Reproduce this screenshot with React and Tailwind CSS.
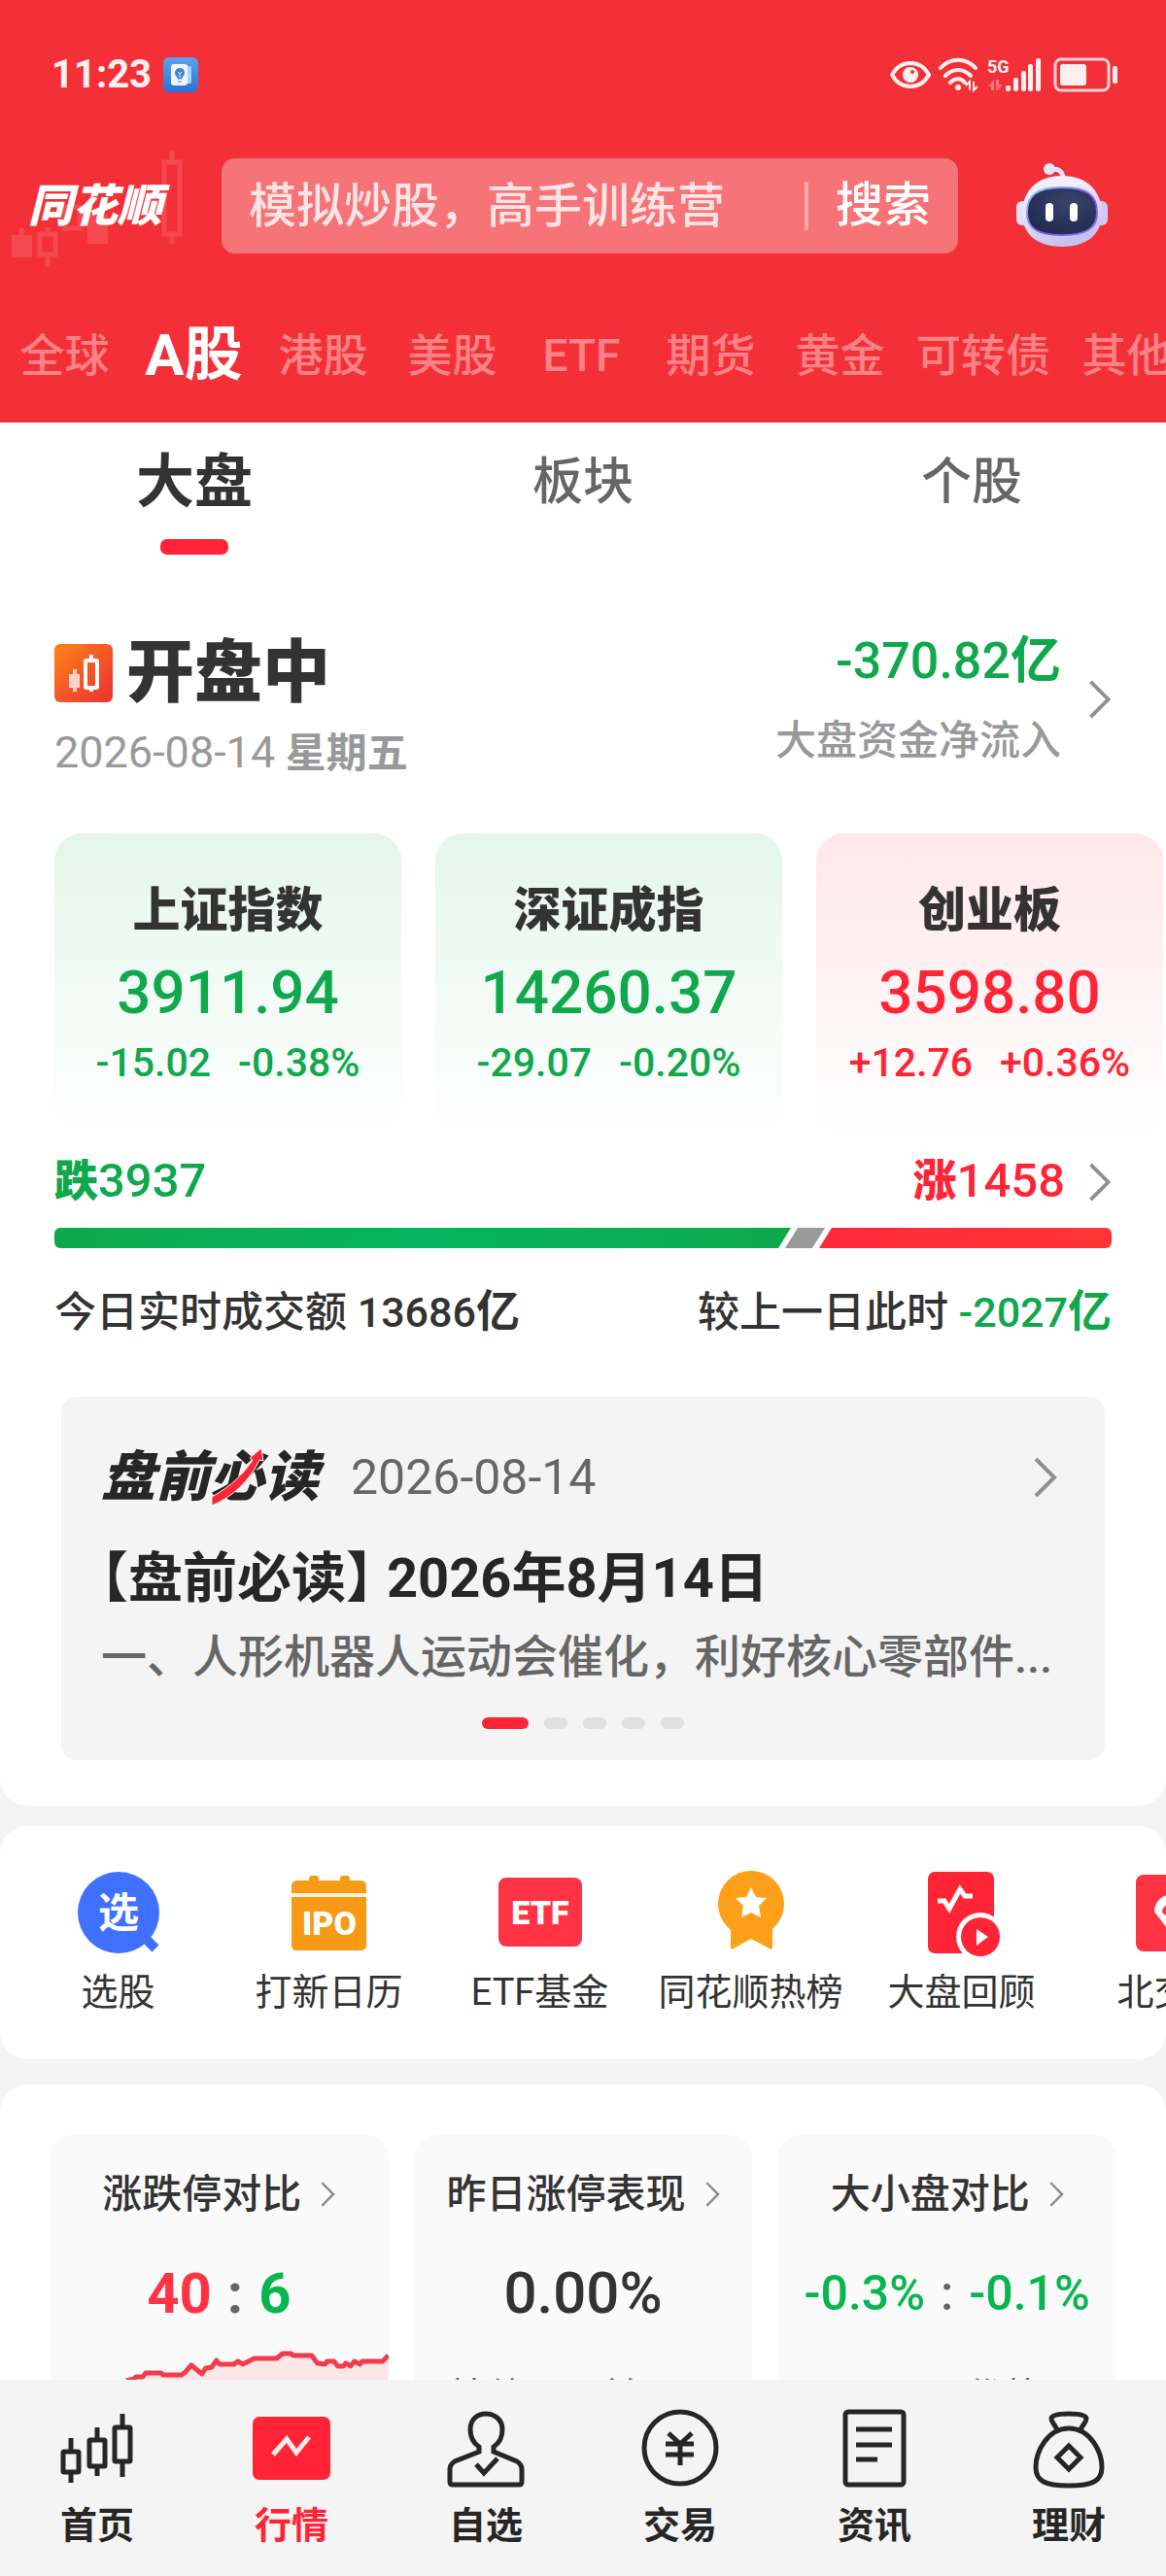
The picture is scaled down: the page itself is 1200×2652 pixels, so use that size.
import React, { useState } from 'react'

const markets = ['全球', 'A股', '港股', '美股', 'ETF', '期货', '黄金', '可转债', '其他']
const views = ['大盘', '板块', '个股']

const indices = [
  { name: '上证指数', value: '3911.94', change: '-15.02', percent: '-0.38%', up: false },
  { name: '深证成指', value: '14260.37', change: '-29.07', percent: '-0.20%', up: false },
  { name: '创业板', value: '3598.80', change: '+12.76', percent: '+0.36%', up: true },
]

const breadth = { down: 758, flat: 41, up: 301 }

const Chevron = ({ className }) => (
  <svg viewBox="0 0 24 42" fill="none" className={className} aria-hidden="true">
    <path d="M2 2 L21 21 L2 40" stroke="#8f8f8f" strokeWidth="4" />
  </svg>
)

/* Barra de estado */
const StatusBar = () => (
  <div className="flex h-[54px] items-center justify-between pl-[53px] pr-[50px] text-[#fff0f0]">
    <div className="flex items-center gap-3">
      <span className="text-[40px] font-bold leading-[54px]">11:23</span>
      <svg viewBox="0 0 36 36" className="h-9 w-9" aria-hidden="true">
        <defs>
          <linearGradient id="note" x1="0" y1="0" x2="0" y2="1">
            <stop offset="0" stopColor="#5aa5ea" />
            <stop offset="1" stopColor="#2c6fd6" />
          </linearGradient>
        </defs>
        <rect width="36" height="36" rx="6" fill="url(#note)" />
        <rect x="22" y="9" width="7" height="18" rx="2" fill="#a9d2f7" />
        <rect x="8" y="7" width="17" height="22" rx="3" fill="#eef7ff" />
        <circle cx="17" cy="16" r="5" fill="#3b82d8" />
        <path d="M15 19h4v3h-4zM15 25h4" fill="#3b82d8" stroke="#3b82d8" />
        <path d="M15 15l2 2 2-2M17 17v4" stroke="#eef7ff" fill="none" />
      </svg>
    </div>
    <div className="flex items-center gap-2">
      <svg viewBox="0 0 42 36" className="h-9 w-[42px]" aria-hidden="true">
        <path d="M2 18C7 9 14 6 21 6s14 3 19 12c-5 9-12 12-19 12S7 27 2 18z" fill="none" stroke="currentColor" strokeWidth="4" />
        <circle cx="21" cy="18" r="8" fill="currentColor" />
        <circle cx="23" cy="15" r="2" fill="#f33038" />
      </svg>
      <svg viewBox="0 0 42 36" className="h-9 w-[42px]" fill="none" stroke="currentColor" strokeWidth="4" aria-hidden="true">
        <path d="M2 11c10-11 26-11 36 0M7 19c8-8 18-8 26 0M12 26c5-5 11-5 15 0" strokeLinecap="round" />
        <circle cx="20" cy="31" r="3" fill="currentColor" stroke="none" />
        <path d="M28 29l4-4v9M36 25v9l4-4" strokeWidth="2" />
      </svg>
      <svg viewBox="0 0 56 36" className="h-9 w-14" fill="currentColor" aria-hidden="true">
        <text x="0" y="16" fontSize="18" fontWeight="700">5G</text>
        <path d="M1 30l6-7v11H4v-4zM9 23h3v5h4l-5 6H9z" opacity="0.35" />
        <rect x="19" y="29" width="5" height="6" rx="2" />
        <rect x="27" y="21" width="5" height="14" rx="2" />
        <rect x="35" y="14" width="5" height="21" rx="2" />
        <rect x="42" y="7" width="5" height="28" rx="2" />
        <rect x="50" y="1" width="5" height="34" rx="2" />
      </svg>
      <svg viewBox="0 0 66 36" className="ml-1 h-9 w-[66px]" aria-hidden="true">
        <rect x="2" y="2" width="55" height="32" rx="6" fill="none" stroke="currentColor" strokeOpacity="0.85" strokeWidth="3" />
        <rect x="7" y="7" width="27" height="22" rx="3" fill="currentColor" />
        <rect x="61" y="9" width="5" height="18" rx="2" fill="currentColor" />
      </svg>
    </div>
  </div>
)

const Logo = () => (
  <div className="relative ml-[29px] w-[142px] shrink-0">
    {/* Velas de fondo */}
    <svg
      viewBox="0 0 180 122"
      className="absolute -left-[21px] -top-[25px] h-[122px] w-[180px]"
      fill="none"
      stroke="#f5494f"
      strokeWidth="5"
      aria-hidden="true"
    >
      <path d="M4 87h21v23H4z" fill="#f5494f" stroke="none" />
      <rect x="12" y="80" width="5" height="8" fill="#f5494f" stroke="none" />
      <rect x="33" y="86" width="16" height="21" />
      <path d="M41 79v6M41 109v11" />
      <rect x="58" y="58" width="16" height="22" />
      <rect x="82" y="66" width="21" height="30" fill="#f5494f" stroke="none" />
      <rect x="161" y="12" width="16" height="74" />
      <path d="M169 0v11M169 87v9" />
    </svg>
    <h1 className="relative whitespace-nowrap text-[46px] font-black italic leading-[64px] text-white">同花顺</h1>
  </div>
)

const Robot = () => (
  <svg viewBox="0 0 94 90" className="h-[90px] w-[94px]" aria-hidden="true">
    <defs>
      <linearGradient id="head" x1="0" y1="0" x2="0.4" y2="1">
        <stop offset="0.3" stopColor="#f1effb" />
        <stop offset="1" stopColor="#c6c2ee" />
      </linearGradient>
      <linearGradient id="rim" x1="0" y1="0" x2="1" y2="1">
        <stop offset="0" stopColor="#7fd0e8" />
        <stop offset="0.6" stopColor="#8a4ff0" />
        <stop offset="1" stopColor="#7c6cf2" />
      </linearGradient>
      <radialGradient id="face" cx="0.6" cy="0.3" r="0.7">
        <stop offset="0" stopColor="#38446b" />
        <stop offset="1" stopColor="#222b50" />
      </radialGradient>
    </defs>
    <path d="M34 8c8-2 14 0 14 9" fill="none" stroke="#e4e0f6" strokeWidth="5" />
    <circle cx="34" cy="7" r="6" fill="#e9e6f8" />
    <rect x="0" y="40" width="14" height="25" rx="6" fill="#e2def7" />
    <rect x="80" y="40" width="14" height="25" rx="6" fill="#cfcaf3" />
    <path d="M47 14c27 0 41 17 41 39 0 23-18 34-41 34S6 76 6 53c0-22 14-39 41-39z" fill="url(#head)" />
    <path d="M47 26c26 0 36 8 36 26 0 16-11 23-36 23s-36-7-36-23c0-18 10-26 36-26z" fill="url(#face)" stroke="url(#rim)" strokeWidth="2" />
    <rect x="30" y="42" width="8" height="19" rx="4" fill="#fff" />
    <rect x="55" y="42" width="8" height="19" rx="4" fill="#fff" />
  </svg>
)

const Header = ({ market, setMarket }) => (
  <header className="bg-[#f33038] pt-[50px]">
    <StatusBar />
    <div className="mt-[59px] flex h-[98px] items-center">
      <Logo />
      <form
        onSubmit={(e) => e.preventDefault()}
        className="ml-[57px] flex h-full min-w-0 flex-1 items-center rounded-[14px] bg-[#f67378] px-7"
      >
        <input
          type="text"
          aria-label="搜索"
          placeholder="模拟炒股，高手训练营"
          className="h-full min-w-0 flex-1 bg-transparent text-[49px] font-medium text-white outline-none placeholder:text-[#ffe4e5]"
        />
        <span className="mr-7 h-[50px] w-1 bg-[#fbaaae]"></span>
        <button type="submit" className="text-[49px] font-medium leading-[64px] text-white">搜索</button>
      </form>
      <button type="button" aria-label="AI" className="mx-[60px] shrink-0">
        <Robot />
      </button>
    </div>
    <nav className="mt-9 flex h-[138px] items-center overflow-hidden">
      {markets.map((item) => (
        <button
          key={item}
          type="button"
          onClick={() => setMarket(item)}
          className={`min-w-[133px] shrink-0 whitespace-nowrap px-3 leading-[72px] ${
            item === market ? 'text-[60px] font-bold text-white' : 'text-[46px] font-medium text-[#fb8286]'
          }`}
        >
          {item}
        </button>
      ))}
    </nav>
  </header>
)

const IndexCard = ({ item }) => (
  <button
    type="button"
    className={`flex w-[357px] shrink-0 flex-col items-center whitespace-nowrap rounded-[28px] bg-gradient-to-b to-white py-[50px] ${
      item.up ? 'from-[#fee7e9] text-[#ff2436]' : 'from-[#e4f6eb] text-[#10a84c]'
    }`}
  >
    <span className="text-[49px] font-black leading-[60px] text-[#333]">{item.name}</span>
    <span className="mt-[18px] text-[62px] font-medium leading-[72px]">{item.value}</span>
    <span className="mt-3 flex gap-7 text-[41px] font-medium leading-[48px]">
      <span>{item.change}</span>
      <span>{item.percent}</span>
    </span>
  </button>
)

const Breadth = () => (
  <div className="mx-14 mt-6">
    <div className="flex items-center justify-between text-[49px] font-medium leading-[48px]">
      <p className="text-[#10a84c]"><b className="text-[45px] font-black">跌</b>3937</p>
      <a href="#breadth" className="flex items-center gap-6 text-[#ff2436]">
        <span><b className="text-[45px] font-black">涨</b>1458</span>
        <Chevron className="h-10 w-6" />
      </a>
    </div>
    <div className="mt-[23px] flex h-[21px] overflow-hidden rounded-md">
      <div
        className="bg-gradient-to-r from-[#0ca94b] via-[#05b45f] to-[#0ca94b] [clip-path:polygon(0_0,100%_0,calc(100%-13px)_100%,0_100%)]"
        style={{ flexGrow: breadth.down }}
      ></div>
      <div
        className="-ml-1.5 bg-[#999] [clip-path:polygon(13px_0,100%_0,calc(100%-13px)_100%,0_100%)]"
        style={{ flexGrow: breadth.flat }}
      ></div>
      <div
        className="-ml-1.5 bg-gradient-to-r from-[#ff2a38] to-[#ff3535] [clip-path:polygon(13px_0,100%_0,100%_100%,0_100%)]"
        style={{ flexGrow: breadth.up }}
      ></div>
    </div>
    <div className="mt-[42px] flex items-center justify-between text-[43px] font-medium leading-[48px] text-[#333]">
      <p>今日实时成交额 13686<b className="text-[45px] font-bold">亿</b></p>
      <p>较上一日此时 <span className="text-[#10a84c]">-2027<b className="text-[45px] font-bold">亿</b></span></p>
    </div>
  </div>
)

const News = () => (
  <article className="mx-[63px] mt-[63px] rounded-2xl bg-[#f4f4f4] px-[41px] pb-8 pt-[51px]">
    <div className="flex h-16 items-center">
      <div className="relative w-[225px] shrink-0">
        <span className="whitespace-nowrap text-[56px] font-black italic leading-[64px] text-[#262626]">盘前必读</span>
        <svg viewBox="0 0 54 60" className="absolute left-[114px] top-0.5 h-[60px] w-[54px]" aria-hidden="true">
          <path d="M0 59V50C20 39 32 27 42 12l-3-2L51 0l2 13-4-1C40 32 22 50 0 59z" fill="#ff2436" stroke="#f4f4f4" strokeWidth="1" />
        </svg>
      </div>
      <time className="ml-8 text-[50px] leading-[64px] text-[#666]">2026-08-14</time>
      <Chevron className="ml-auto mr-2 h-[44px] w-6" />
    </div>
    <h2 className="mt-10 whitespace-nowrap text-[56px] font-bold leading-[64px] text-[#262626] [font-feature-settings:'halt']">
      【盘前必读】 2026年8月14日
    </h2>
    <p className="mt-[21px] whitespace-nowrap text-[47px] font-medium leading-[56px] text-[#666]">
      一、人形机器人运动会催化，利好核心零部件...
    </p>
    <div className="mt-[34px] flex justify-center gap-4">
      <span className="h-3 w-12 rounded-full bg-[#ff2436]"></span>
      {[2, 3, 4, 5].map((n) => (
        <span key={n} className="h-3 w-6 rounded-full bg-[#e0e0e0]"></span>
      ))}
    </div>
  </article>
)

const tools = [
  {
    label: '选股',
    icon: (
      <>
        <circle cx="45" cy="44" r="42" fill="#4070ff" />
        <path d="M70 68l13 13" stroke="#4070ff" strokeWidth="10" strokeLinejoin="round" />
        <text x="45" y="59" fontSize="42" fontWeight="700" fill="#fff" textAnchor="middle">选</text>
      </>
    ),
  },
  {
    label: '打新日历',
    icon: (
      <>
        <rect x="24" y="6" width="10" height="10" rx="3" fill="#f79a16" />
        <rect x="56" y="6" width="10" height="10" rx="3" fill="#f79a16" />
        <path d="M6 24v-7q0-6 6-6h65q6 0 6 6v7z" fill="#f79a16" />
        <path d="M6 28h77v49q0 6-6 6H12q-6 0-6-6z" fill="#f79a16" />
        <rect x="6" y="24" width="77" height="4" fill="#fff2dc" />
        <text x="45" y="67" fontSize="34" fontWeight="900" fill="#fff" textAnchor="middle">IPO</text>
      </>
    ),
  },
  {
    label: 'ETF基金',
    icon: (
      <>
        <rect x="2" y="8" width="86" height="71" rx="8" fill="#ff3344" />
        <text x="45" y="56" fontSize="34" fontWeight="900" fill="#fff" textAnchor="middle">ETF</text>
      </>
    ),
  },
  {
    label: '同花顺热榜',
    icon: (
      <>
        <circle cx="45" cy="35" r="34" fill="#ff9f1a" />
        <path d="M24 57h43v23q0 3-3 1L45 71 27 81q-3 2-3-1z" fill="#ff9f1a" />
        <path d="M45 18l5 10 11 1-8 8 2 12-10-5-10 5 2-12-8-8 11-1z" fill="#fff" />
      </>
    ),
  },
  {
    label: '大盘回顾',
    icon: (
      <>
        <rect x="10" y="2" width="68" height="84" rx="7" fill="#ff2436" />
        <path d="M20 32h7l5 8L43 20l5 7h8" fill="none" stroke="#fff" strokeWidth="5" />
        <circle cx="64" cy="69" r="25" fill="#fff" />
        <circle cx="64" cy="69" r="20" fill="#ff2436" />
        <path d="M60 61l12 8-12 9z" fill="#fff" />
      </>
    ),
  },
  {
    label: '北交所',
    icon: (
      <>
        <rect x="7" y="5" width="76" height="79" rx="8" fill="#ff3344" />
        <path d="M45 25c-12 0-19 9-19 18l19 25 19-25c0-9-7-18-19-18z" fill="#fff" />
        <path d="M34 44l11 8 11-8c0-12-22-12-22 0z" fill="#ff3344" />
      </>
    ),
  },
]

const StatCard = ({ title, children }) => (
  <div className="flex flex-1 flex-col items-center overflow-hidden rounded-t-[24px] bg-[#fafafa] pt-[37px]">
    <a href="#stat" className="flex items-center gap-5 whitespace-nowrap text-[41px] font-medium leading-[48px] text-[#333]">
      {title}
      <Chevron className="h-[26px] w-[15px]" />
    </a>
    {children}
  </div>
)

const trend =
  'M79 35L87 33 89 31H96L99 27H115L117 29H136L140 26 146 19 157 28 161 22 167 21 172 14 175 18H190L194 15 199 18 211 12H234L240 7H249L251 9H270L276 17 284 18 286 15H293L297 20H303L305 17 310 20 314 15 320 18 322 15H343L349 9'

const Stats = () => (
  <section className="mt-[26px] flex gap-[26px] rounded-t-[28px] bg-white px-[51px] pt-[52px]">
    <StatCard title="涨跌停对比">
      <p className="mt-[42px] flex gap-4 text-[58px] font-bold leading-[72px]">
        <span className="text-[#ff3344]">40</span>
        <span className="text-[#666]">:</span>
        <span className="text-[#08b650]">6</span>
      </p>
      <svg viewBox="0 0 349 120" className="mt-[19px] w-full" aria-hidden="true">
        <path d={`${trend}V120H0V80z`} fill="#fee6e8" />
        <path d={trend} fill="none" stroke="#f23c4b" strokeWidth="5" strokeLinejoin="round" />
      </svg>
    </StatCard>
    <StatCard title="昨日涨停表现">
      <p className="mt-[42px] text-[60px] font-medium leading-[72px] text-[#333]">0.00%</p>
      <p className="mt-[51px] text-[39px] leading-[40px] text-[#666]">情绪不及前一日</p>
    </StatCard>
    <StatCard title="大小盘对比">
      <p className="mt-[42px] flex gap-4 whitespace-nowrap text-[50px] font-medium leading-[72px] text-[#08b650]">
        <span>-0.3%</span>
        <span className="text-[#666]">:</span>
        <span>-0.1%</span>
      </p>
      <p className="mt-[51px] text-[39px] leading-[40px] text-[#666]">无明显优势</p>
    </StatCard>
  </section>
)

const navItems = [
  {
    label: '首页',
    icon: (
      <>
        <rect x="5" y="44" width="16" height="21" rx="1" />
        <path d="M13 30v13M13 66v10M40 19v12M40 60v9M66 5v13M66 55v15" />
        <rect x="32" y="32" width="16" height="27" rx="1" />
        <rect x="58" y="19" width="16" height="35" rx="1" />
      </>
    ),
  },
  {
    label: '行情',
    icon: (
      <>
        <rect x="0" y="8" width="80" height="65" rx="7" fill="#ff2436" stroke="none" />
        <path d="M21 47L35 31 45 45 58 29" stroke="#ffeaec" />
      </>
    ),
  },
  {
    label: '自选',
    icon: (
      <>
        <path d="M33 44v-5C27 35 24 29 24 21 24 11 31 5 40 5s17 6 17 16c0 8-3 14-9 18v5l24 10c3 2 5 4 5 8v13q0 3-3 3H6q-3 0-3-3V62c0-4 2-6 5-8z" />
        <path d="M30 57l8 9 14-15" />
      </>
    ),
  },
  {
    label: '交易',
    icon: (
      <>
        <circle cx="40" cy="40" r="37" />
        <path d="M28 25l12 11 12-11M25 36h29M25 47h29M40 36v22" />
      </>
    ),
  },
  {
    label: '资讯',
    icon: (
      <>
        <rect x="10" y="3" width="60" height="75" rx="3" />
        <path d="M21 21h37M21 37h37M21 52h22" />
      </>
    ),
  },
  {
    label: '理财',
    icon: (
      <>
        <path d="M28 22c-2-6-6-8-6-12 0-3 4-5 18-5s18 2 18 5c0 4-4 6-6 12" />
        <path d="M40 20c-22 0-34 24-34 40 0 14 9 19 34 19s34-5 34-19c0-16-12-40-34-40z" />
        <path d="M40 38l12 12-12 12-12-12z" />
      </>
    ),
  },
]

const TabBar = () => (
  <nav className="grid shrink-0 grid-cols-6 bg-[#f4f4f4] pb-7 pt-[30px]">
    {navItems.map((item) => (
      <a
        key={item.label}
        href="#tab"
        className={`flex flex-col items-center text-[38px] font-bold leading-[48px] ${
          item.label === '行情' ? 'text-[#ff2436]' : 'text-[#262626]'
        }`}
      >
        <svg viewBox="0 0 80 80" className="mb-4 h-20 w-20 overflow-visible" fill="none" stroke="currentColor" strokeWidth="5" aria-hidden="true">
          {item.icon}
        </svg>
        {item.label}
      </a>
    ))}
  </nav>
)

const App = () => {
  const [market, setMarket] = useState('A股')
  const [view, setView] = useState('大盘')

  return (
    <div lang="zh-CN" className="flex h-screen flex-col overflow-hidden bg-[#f4f4f4] font-[Roboto,'Noto_Sans_CJK_SC',sans-serif]">
      <main className="min-h-0 flex-1 overflow-x-hidden overflow-y-auto [scrollbar-width:none]">
        <Header market={market} setMarket={setMarket} />

        <section className="rounded-b-[28px] bg-white pb-[47px]">
          <div className="grid grid-cols-3 pt-[22px]">
            {views.map((item) => (
              <button key={item} type="button" onClick={() => setView(item)} className="flex flex-col items-center leading-[80px]">
                <span className={item === view ? 'text-[60px] font-bold text-[#333]' : 'text-[52px] font-medium text-[#666]'}>
                  {item}
                </span>
                <span className={`mt-[18px] h-4 w-[70px] rounded-[7px] ${item === view ? 'bg-[#ff2436]' : ''}`}></span>
              </button>
            ))}
          </div>

          {/* Estado del mercado */}
          <div className="mx-14 mt-[82px] flex items-start justify-between">
            <div className="pt-1">
              <div className="flex items-center gap-[14px]">
                <svg viewBox="0 0 60 60" className="h-[60px] w-[60px]" aria-hidden="true">
                  <defs>
                    <linearGradient id="open" x1="0" y1="0" x2="1" y2="1">
                      <stop offset="0.1" stopColor="#fb7a1a" />
                      <stop offset="0.9" stopColor="#ee3831" />
                    </linearGradient>
                  </defs>
                  <rect width="60" height="60" rx="6" fill="url(#open)" />
                  <path d="M15 31h4v-5h4v5h3v14h-3v4h-4v-4h-4z" fill="#fdd3c8" />
                  <rect x="32" y="17" width="12" height="28" rx="1" fill="none" stroke="#fff" strokeWidth="4" />
                  <path d="M38 11v5M38 46v3" stroke="#fff" strokeWidth="4" />
                </svg>
                <h2 className="text-[70px] font-black leading-[72px] text-[#333]">开盘中</h2>
              </div>
              <p className="mt-[22px] text-[42px] leading-[48px] text-[#999]">
                <span className="text-[45px]">2026-08-14</span> <b className="font-bold">星期五</b>
              </p>
            </div>
            <a href="#flow" className="flex items-center gap-7">
              <div className="text-right">
                <p className="text-[52px] font-medium leading-[56px] text-[#10a84c]">-370.82<b className="font-bold">亿</b></p>
                <p className="mt-[30px] text-[42px] font-medium leading-[48px] text-[#999]">大盘资金净流入</p>
              </div>
              <Chevron className="h-10 w-6" />
            </a>
          </div>

          <div className="mt-[58px] flex gap-[35px] overflow-hidden pl-14">
            {indices.map((item) => (
              <IndexCard key={item.name} item={item} />
            ))}
          </div>

          <Breadth />
          <News />
        </section>

        {/* Accesos rápidos */}
        <section className="mt-[21px] flex overflow-hidden rounded-[28px] bg-white py-[45px] pl-[13px]">
          {tools.map((tool) => (
            <a key={tool.label} href="#tool" className="flex w-[217px] shrink-0 flex-col items-center text-[38px] leading-[48px] text-[#333]">
              <svg viewBox="0 0 90 90" className="mb-3 h-[90px] w-[90px]" aria-hidden="true">
                {tool.icon}
              </svg>
              {tool.label}
            </a>
          ))}
        </section>

        <Stats />
      </main>
      <TabBar />
    </div>
  )
}

export default App
